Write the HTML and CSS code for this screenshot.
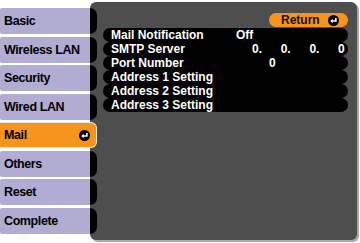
FILE: index.html
```html
<!DOCTYPE html>
<html lang="en">
<head>
  <meta charset="UTF-8" />
  <meta name="viewport" content="width=device-width, initial-scale=1.0"/>
  <title>Mail</title>
  <link rel="stylesheet" href="styles.css">
</head>
<body>

  <div class="screen">

    <!-- Menu tabs -->
    <nav class="tabs">
      <div class="tab">Basic</div>
      <div class="tab">Wireless LAN</div>
      <div class="tab">Security</div>
      <div class="tab">Wired LAN</div>
      <div class="tab active">Mail
        <svg class="enter" width="11" height="11" viewBox="0 0 12 12">
          <circle cx="6" cy="6" r="6" fill="#000"/>
          <path d="M8.6 3.2 V6.6 H4.4" fill="none" stroke="#fff" stroke-width="1.7"/>
          <path d="M2.4 6.6 L5.2 4.2 L5.2 9 Z" fill="#fff"/>
        </svg>
      </div>
      <div class="tab">Others</div>
      <div class="tab">Reset</div>
      <div class="tab">Complete</div>
    </nav>

    <!-- Settings panel -->
    <section class="panel">
      <div class="panel-top">
        <div class="return">Return
          <svg class="enter" width="11" height="11" viewBox="0 0 12 12">
            <circle cx="6" cy="6" r="6" fill="#000"/>
            <path d="M8.6 3.2 V6.6 H4.4" fill="none" stroke="#fff" stroke-width="1.7"/>
            <path d="M2.4 6.6 L5.2 4.2 L5.2 9 Z" fill="#fff"/>
          </svg>
        </div>
      </div>
      <ul class="rows">
        <li><span>Mail Notification</span><span class="val">Off</span></li>
        <li><span>SMTP Server</span>
          <span class="val ip"><span>0.</span><span>0.</span><span>0.</span><span>0</span></span>
        </li>
        <li><span>Port Number</span><span class="val port">0</span></li>
        <li><span>Address 1 Setting</span><span></span></li>
        <li><span>Address 2 Setting</span><span></span></li>
        <li><span>Address 3 Setting</span><span></span></li>
      </ul>
    </section>

  </div>

</body>
</html>
```

FILE: styles.css
```css
body {
  margin: 0;
  background-color: #ffffff;
  font-family: "Liberation Sans", Arial, sans-serif;
  font-weight: bold;
}
.screen {
  display: flex;
  align-items: flex-start;
  width: 360px;
  height: 243px;
  overflow: hidden;
}
.tabs {
  position: relative;
  z-index: 1;
  display: flex;
  flex-direction: column;
  gap: 2.5px;
  padding-top: 8px;
  width: 97px;
  flex-shrink: 0;
}
.tab {
  box-sizing: border-box;
  width: 97px;
  height: 26px;
  padding-left: 4px;
  background-color: #b0acd2;
  border-right: 7px solid #000;
  border-radius: 2px 7px 7px 2px;
  display: flex;
  align-items: center;
  font-size: 12.5px;
  letter-spacing: -0.4px;
  color: #000;
}
.tab.active {
  background-color: #f7941d;
  border: 1px solid #e9e2d6;
  border-left: none;
  border-radius: 0 6px 6px 0;
  justify-content: space-between;
  padding-right: 6px;
}
.enter {
  display: block;
}
.panel {
  box-sizing: border-box;
  margin-left: -7px;
  margin-top: 2px;
  width: 267px;
  height: 238px;
  flex-shrink: 0;
  background-color: #4e4e4e;
  border-radius: 6px;
  box-shadow: 2px 2px 0 #a9a9a9;
  padding: 11px 9px 0 13px;
}
.panel-top {
  display: flex;
  justify-content: flex-end;
}
.return {
  box-sizing: border-box;
  width: 79px;
  height: 14px;
  padding: 0 9px 0 12px;
  border-radius: 7px;
  background-color: #f7941d;
  color: #111;
  font-size: 12px;
  line-height: 14px;
  display: flex;
  align-items: center;
  justify-content: space-between;
}
.rows {
  list-style-type: none;
  margin: 1px 0 0 0;
  padding: 0;
}
.rows li {
  display: grid;
  grid-template-columns: 125px 1fr;
  height: 14px;
  padding-left: 8px;
  background-color: #000;
  border-radius: 7px;
  color: #fff;
  font-size: 12px;
  line-height: 14px;
  white-space: nowrap;
}
.val.ip {
  display: flex;
  padding-left: 16px;
}
.val.ip span {
  width: 28.7px;
}
.val.port {
  padding-left: 33px;
}
```
